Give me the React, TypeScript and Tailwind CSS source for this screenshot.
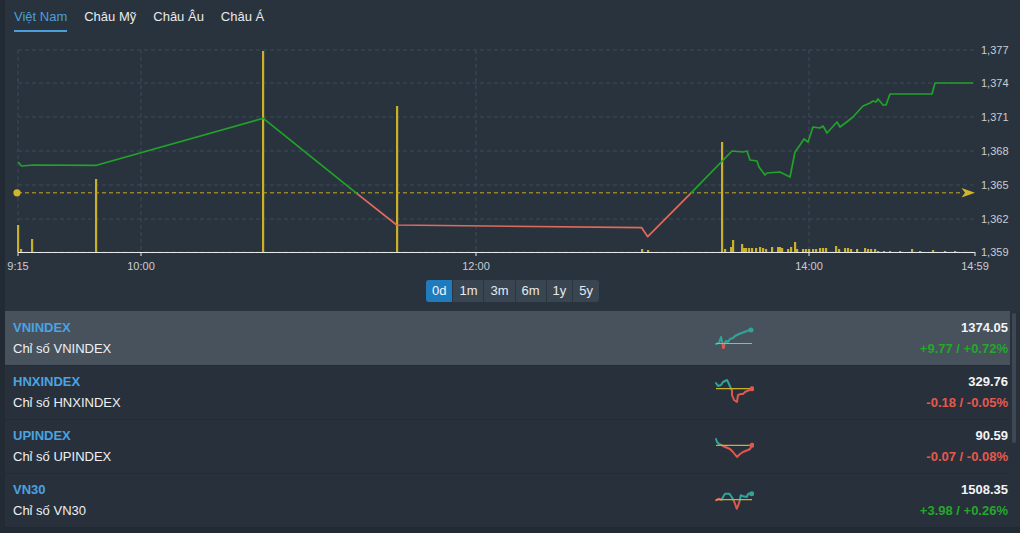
import React from "react";

const tabs = ["Việt Nam", "Châu Mỹ", "Châu Âu", "Châu Á"];
const periods = ["0d", "1m", "3m", "6m", "1y", "5y"];

const yLabels: [string, number][] = [
  ["1,377", 50],
  ["1,374", 83],
  ["1,371", 117],
  ["1,368", 151],
  ["1,365", 185],
  ["1,362", 219],
  ["1,359", 252],
];

const xLabels: [string, number][] = [
  ["9:15", 18],
  ["10:00", 141],
  ["12:00", 476],
  ["14:00", 809],
  ["14:59", 975],
];

// [x, height] of volume bars, base at y=252
const volumes: [number, number][] = [
  [18, 27], [21, 3], [32, 13], [96, 73], [263, 201], [397, 146], [642, 3], [648, 2],
  [722, 110], [725, 3], [731, 5], [733, 12], [742, 8], [744, 4], [746, 4], [749, 4],
  [752, 4], [756, 4], [760, 5], [763, 4], [766, 3], [772, 5], [778, 5], [780, 5],
  [782, 4], [788, 3], [791, 5], [795, 10], [797, 3], [803, 3], [806, 3], [809, 3],
  [813, 3], [816, 3], [820, 4], [823, 4], [826, 4], [836, 6], [839, 3], [845, 4],
  [848, 4], [851, 3], [857, 3], [865, 4], [868, 3], [871, 3], [875, 3], [878, 1],
  [884, 1], [890, 1], [900, 1], [912, 3], [920, 1], [933, 2], [945, 1], [955, 1],
];

const greenA = "M18 162 L21.5 166 L33 165 L96.5 165.3 L263.3 118.3 L356.7 193.3";
const redB = "M356.7 193.3 L396.7 225 L641.7 227.7 L647.7 236.7 L690.7 193.3";
const greenC =
  "M690.7 193.3 L732 151 L743 152 L747 151 L750 160 L757 161 L759 167 L765 175 L767 173 L780 172 L790 177 L795 152 L800 145 L804 139 L808 142 L813 127 L820 128 L823 126 L827 133 L837 122 L840 127 L848 121 L853 117 L863 106 L870 103 L873 101 L876 102 L878 99 L883 105 L886 105 L890 94 L932 94 L935 83 L973 83";

type Spark = { ref: number; segs: { d: string; up: boolean }[]; dot: [number, number]; dotUp: boolean };

const rows = [
  {
    code: "VNINDEX",
    name: "Chỉ số VNINDEX",
    price: "1374.05",
    change: "+9.77 / +0.72%",
    up: true,
    active: true,
    spark: {
      ref: 20.5,
      segs: [
        { d: "M2 21 L5 20 L7 14 L8.5 20.5", up: true },
        { d: "M8.5 20.5 L9 25 L10 24.5 L10.5 20.5", up: false },
        { d: "M10.5 20.5 L12 18 L14 19 L16 16 L19 15 L21 13 L25 11 L29 9.5 L33 8 L36 6.5 L37 7", up: true },
      ],
      dot: [37, 7],
      dotUp: true,
    } as Spark,
  },
  {
    code: "HNXINDEX",
    name: "Chỉ số HNXINDEX",
    price: "329.76",
    change: "-0.18 / -0.05%",
    up: false,
    active: false,
    spark: {
      ref: 10.7,
      segs: [
        { d: "M2 5 L4 8 L7 7 L9 4 L13 2 L15 6 L17 10.7", up: true },
        { d: "M17 10.7 L18 12 L18 17 L20 22 L23 24 L24 17 L27 16 L29 16 L31 14 L33 13 L36 12 L38 10.7", up: false },
      ],
      dot: [38, 10.7],
      dotUp: false,
    } as Spark,
  },
  {
    code: "UPINDEX",
    name: "Chỉ số UPINDEX",
    price: "90.59",
    change: "-0.07 / -0.08%",
    up: false,
    active: false,
    spark: {
      ref: 13.3,
      segs: [
        { d: "M2 7 L3 10 L5 12 L8 13.3", up: true },
        { d: "M8 13.3 L9 14 L16 17 L19 20 L23 25 L26 22 L29 20 L34 18 L36 17 L38 13.3", up: false },
      ],
      dot: [38, 13.3],
      dotUp: false,
    } as Spark,
  },
  {
    code: "VN30",
    name: "Chỉ số VN30",
    price: "1508.35",
    change: "+3.98 / +0.26%",
    up: true,
    active: false,
    spark: {
      ref: 13.7,
      segs: [
        { d: "M2 14.3 L5 12.7 L7.5 13.7", up: false },
        { d: "M7.5 13.7 L11 7.7 L15.3 7.7 L17.7 11 L19.3 13.7", up: true },
        { d: "M19.3 13.7 L21 17.7 L22.7 22.7 L24.3 19.3 L26 13.7", up: false },
        { d: "M26 13.7 L26.7 9.3 L29.3 10.3 L32.7 11 L34.3 7.7 L37.7 7.7", up: true },
      ],
      dot: [37.7, 7.7],
      dotUp: true,
    } as Spark,
  },
];

function Sparkline({ spark }: { spark: Spark }) {
  return (
    <svg width="40" height="30" viewBox="0 0 40 30">
      {spark.segs.map((s, i) => (
        <path
          key={i}
          d={s.d}
          fill="none"
          stroke={s.up ? "#2ea596" : "#e0574b"}
          strokeWidth="2"
          strokeLinejoin="round"
          strokeLinecap="round"
        />
      ))}
      <line x1="2" y1={spark.ref} x2="38" y2={spark.ref} stroke="#c9b12a" strokeWidth="1.2" />
      <circle cx={spark.dot[0]} cy={spark.dot[1]} r="2.5" fill={spark.dotUp ? "#2ea596" : "#e0574b"} />
    </svg>
  );
}

function Chart() {
  const font = "Liberation Sans, Arial, sans-serif";
  return (
    <svg width="1015" height="235" viewBox="5 40 1015 235" className="block">
      {yLabels.map(([, y]) => (
        <line key={y} x1="18" y1={y} x2="975" y2={y} stroke="#3f4a56" strokeWidth="1" strokeDasharray="4 3" />
      ))}
      {xLabels.slice(0, 4).map(([, x]) => (
        <line key={x} x1={x} y1="50" x2={x} y2="252" stroke="#3f4a56" strokeWidth="1" strokeDasharray="4 3" />
      ))}
      {volumes.map(([x, h], i) => (
        <rect key={i} x={x - 1} y={252 - h} width="2.2" height={h} fill="#cbb02a" />
      ))}
      <line x1="18" y1="192.8" x2="962" y2="192.8" stroke="#c2a829" strokeWidth="1" strokeDasharray="4 3" />
      <circle cx="17" cy="192.8" r="3.6" fill="#d1b52b" />
      <path d="M961.5 188 L975 192.8 L961.5 197.5 L965 192.8 Z" fill="#d1b52b" />
      <path d={greenA} fill="none" stroke="#21a32a" strokeWidth="1.7" strokeLinejoin="round" />
      <path d={redB} fill="none" stroke="#e06a5b" strokeWidth="1.7" strokeLinejoin="round" />
      <path d={greenC} fill="none" stroke="#21a32a" strokeWidth="1.7" strokeLinejoin="round" />
      <line x1="18" y1="252.5" x2="975" y2="252.5" stroke="#e8eaec" strokeWidth="1.2" />
      {xLabels.map(([, x]) => (
        <line key={x} x1={x} y1="252" x2={x} y2="256" stroke="#e8eaec" strokeWidth="1" />
      ))}
      {yLabels.map(([t, y]) => (
        <text key={t} x="981" y={y + 4} fontSize="11" fill="#c9cdd2" fontFamily={font}>
          {t}
        </text>
      ))}
      {xLabels.map(([t, x]) => (
        <text key={t} x={x} y="270" fontSize="11" fill="#c9cdd2" textAnchor="middle" fontFamily={font}>
          {t}
        </text>
      ))}
    </svg>
  );
}

export default function App() {
  return (
    <div className="flex h-[533px] w-[1020px] overflow-hidden bg-[#222a33] font-['Liberation_Sans',Arial,sans-serif] text-[13px]">
      <div className="w-[5px] shrink-0" />
      <div className="flex flex-1 flex-col">
        <div className="bg-[#29333e] pb-[9px]">
          <div className="flex h-10 gap-[17px] pl-[9px]">
            {tabs.map((t, i) => (
              <div
                key={t}
                className={
                  i === 0
                    ? "h-8 border-b-2 border-[#4a9fd8] pt-[9px] leading-4 text-[#4a9fd8]"
                    : "h-8 border-b-2 border-transparent pt-[9px] leading-4 text-[#e8eaec]"
                }
              >
                {t}
              </div>
            ))}
          </div>
          <Chart />
          <div className="mt-[5px] flex justify-center">
            <div className="flex overflow-hidden rounded-[3px] bg-[#394550]">
              {periods.map((p, i) => (
                <div
                  key={p}
                  className={
                    i === 0
                      ? "flex h-[22px] items-center justify-center bg-[#1f7bbd] px-[6px] text-[#f2f4f6]"
                      : "flex h-[22px] items-center justify-center border-l border-[#2c3640] px-[6px] text-[#e8eaec]"
                  }
                >
                  {p}
                </div>
              ))}
            </div>
          </div>
        </div>
        <div className="flex">
          <div className="flex w-[1005px] flex-col">
            {rows.map((r) => (
              <div
                key={r.code}
                className={
                  r.active
                    ? "flex h-[54px] items-center bg-[#47525d] pl-2 pr-[2px]"
                    : "flex h-[54px] items-center border-t border-[#232b34] bg-[#28313b] pl-2 pr-[2px]"
                }
              >
                <div className="flex w-[700px] flex-col gap-[5px]">
                  <div className="font-bold leading-4 text-[#4aa3e2]">{r.code}</div>
                  <div className="leading-4 text-[#eef0f2]">{r.name}</div>
                </div>
                <div className="ml-[1px] flex w-[40px] items-center">
                  <Sparkline spark={r.spark} />
                </div>
                <div className="flex flex-1 flex-col items-end gap-[5px]">
                  <div className="font-bold leading-4 text-[#f2f4f6]">{r.price}</div>
                  <div className={r.up ? "font-bold leading-4 text-[#23a82a]" : "font-bold leading-4 text-[#e5594d]"}>
                    {r.change}
                  </div>
                </div>
              </div>
            ))}
          </div>
          <div className="w-[10px] bg-[#28313b] pl-[2px] pt-[2px]">
            <div className="h-[130px] w-[4px] rounded-sm bg-[#3e4853]" />
          </div>
        </div>
      </div>
    </div>
  );
}
